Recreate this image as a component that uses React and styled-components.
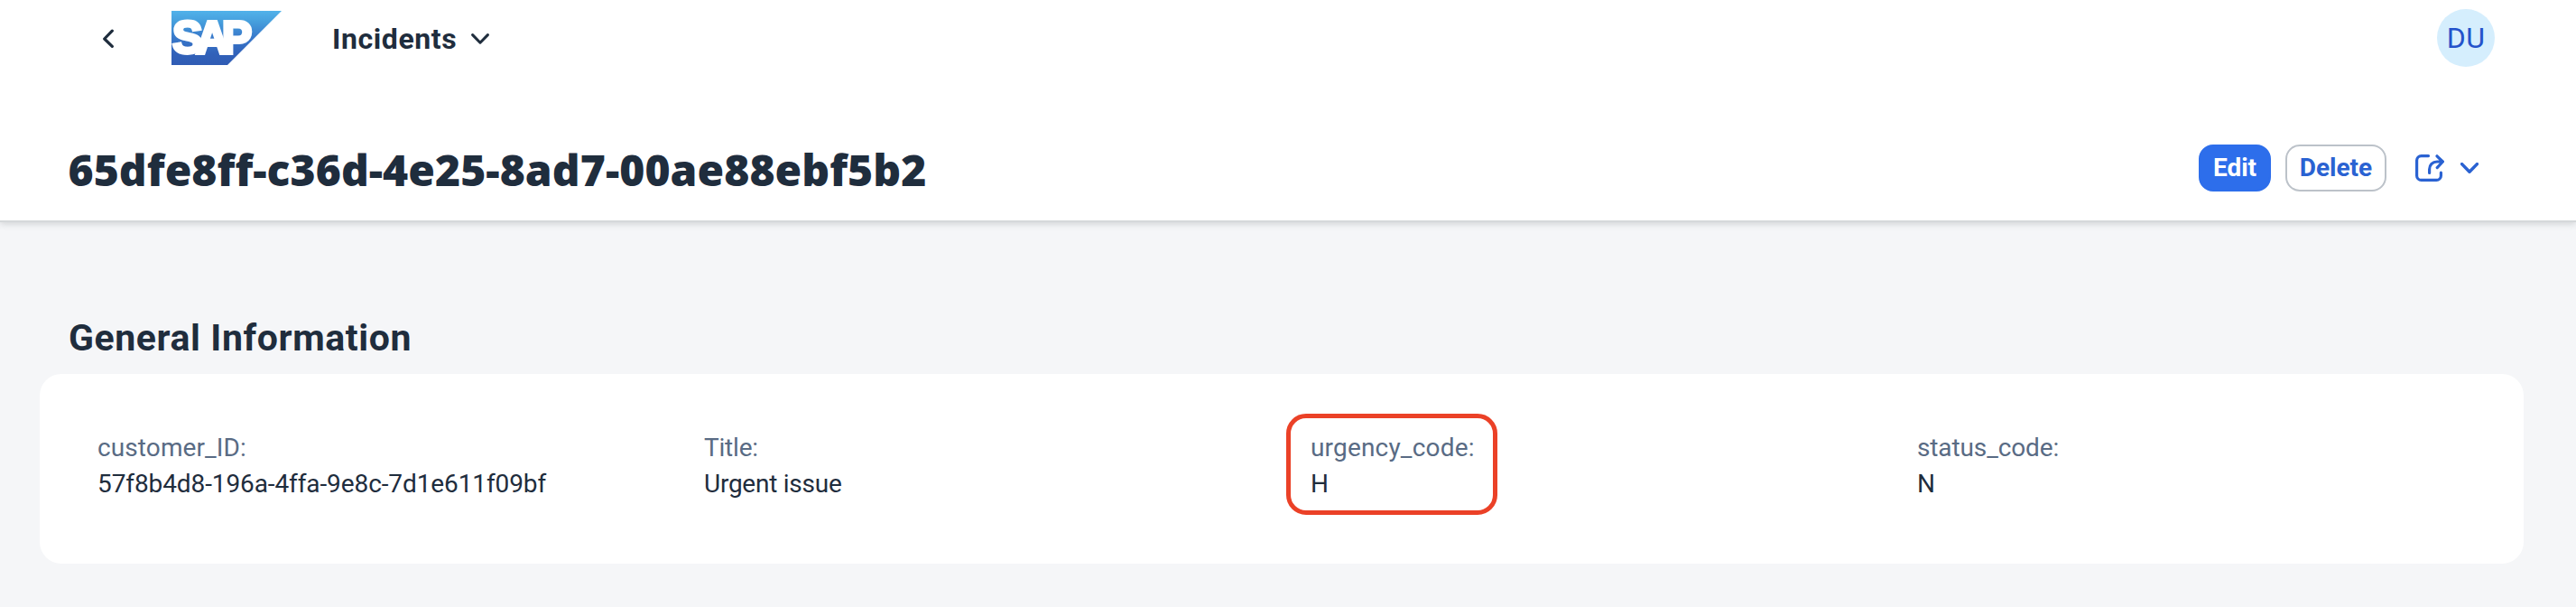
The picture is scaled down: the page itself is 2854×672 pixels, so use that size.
import React from 'react';
import styled, { createGlobalStyle } from 'styled-components';

const GlobalStyle = createGlobalStyle`
  *, *::before, *::after { box-sizing: border-box; }
  body {
    margin: 0;
    background: #f5f6f8;
    color: #1f2d3d;
    font-family: Roboto, "Liberation Sans", sans-serif;
    font-size: 28px;
  }
  button { font: inherit; cursor: pointer; }
`;

const Page = styled.div`
  min-height: 672px;
`;

const Header = styled.header`
  height: 244px;
  background: #fff;
  box-shadow: 0 2px 0 #d5d8da, 0 3px 8px rgba(60, 66, 72, 0.24);
`;

const ShellBar = styled.div`
  display: flex;
  align-items: center;
  height: 84px;
  padding: 0 90px 0 110px;
`;

const IconButton = styled.button`
  display: flex;
  align-items: center;
  justify-content: center;
  padding: 0;
  border: 0;
  background: none;
  color: ${(p) => (p.$accent ? '#2a62d2' : '#1f2d3d')};
`;

const Logo = styled.svg`
  display: block;
  margin: 0 56px 0 60px;
`;

const AppMenu = styled.button`
  display: flex;
  align-items: center;
  gap: 16px;
  padding: 2px 0 0;
  border: 0;
  background: none;
  color: inherit;
`;

const AppName = styled.span`
  font-size: 32px;
  font-weight: 700;
  line-height: 40px;
  letter-spacing: 0.6px;
`;

const Avatar = styled.div`
  display: flex;
  align-items: center;
  justify-content: center;
  width: 64px;
  height: 64px;
  margin-left: auto;
  border-radius: 50%;
  background: #d5eefd;
  color: #2453cb;
  font-size: 32px;
  letter-spacing: 0.5px;
`;

const TitleRow = styled.div`
  display: flex;
  align-items: flex-start;
  justify-content: space-between;
  padding: 74px 108px 0 75.500px;
`;

const PageTitle = styled.h1`
  margin: 0;
  font-family: "Noto Sans", sans-serif;
  font-size: 48px;
  font-weight: 900;
  line-height: 60px;
  letter-spacing: 0.05px;
`;

const Actions = styled.div`
  display: flex;
  align-items: center;
  gap: 16px;
  height: 52px;
  margin-top: 2px;
`;

const Button = styled.button`
  height: 52px;
  width: ${(p) => p.$width}px;
  padding: 0 0 2px;
  border: 2px solid ${(p) => (p.$primary ? '#2d6eeb' : '#bcc2c9')};
  border-radius: 16px;
  background: ${(p) => (p.$primary ? '#2d6eeb' : '#fff')};
  color: ${(p) => (p.$primary ? '#fff' : '#2a62d2')};
  font-weight: 700;
`;

const ShareGroup = styled.div`
  display: flex;
  align-items: center;
  gap: 18px;
  margin-left: 16px;
`;

const Section = styled.section`
  padding: 100px 58px 0 44px;
`;

const SectionTitle = styled.h2`
  margin: 0 0 10px;
  padding-left: 32px;
  font-size: 41px;
  font-weight: 700;
  line-height: 60px;
  letter-spacing: 0.6px;
`;

const Card = styled.div`
  display: grid;
  grid-template-columns: repeat(4, 672px);
  align-items: start;
  height: 210px;
  padding: 62px 0 0 64px;
  border-radius: 24px;
  background: #fff;
`;

const Field = styled.div`
  position: relative;
  width: max-content;
  line-height: 40px;
`;

const FieldLabel = styled.div`
  color: #596b84;
  letter-spacing: ${(p) => p.$spacing || 0}px;
`;

const FieldValue = styled.div`
  letter-spacing: ${(p) => p.$spacing || 0}px;
`;

const Highlight = styled.div`
  position: absolute;
  inset: -18px -25px -14px -27px;
  border: 5px solid #eb4127;
  border-radius: 22px;
`;

const FIELDS = [
  { label: 'customer_ID:', value: '57f8b4d8-196a-4ffa-9e8c-7d1e611f09bf', labelSpacing: 0.1, valueSpacing: -0.1 },
  { label: 'Title:', value: 'Urgent issue', labelSpacing: -0.2, valueSpacing: -0.25 },
  { label: 'urgency_code:', value: 'H', labelSpacing: 0.18, highlighted: true },
  { label: 'status_code:', value: 'N', labelSpacing: -0.12 },
];

const Chevron = ({ stroke }) => (
  <svg width="20" height="12" viewBox="0 0 20 12" fill="none" stroke="currentColor" strokeWidth={stroke} strokeLinecap="round" strokeLinejoin="round">
    <path d="M1.600 1.600 10 10.200l8.400-8.600" />
  </svg>
);

export default function App() {
  return (
    <Page>
      <GlobalStyle />
      <Header>
        <ShellBar>
          <IconButton aria-label="Back">
            <svg width="20" height="22" viewBox="0 0 20 22" fill="none" stroke="currentColor" strokeWidth="3.200" strokeLinecap="round" strokeLinejoin="round">
              <path d="M14.300 3.200 5.700 12l8.600 8.400" />
            </svg>
          </IconButton>
          <Logo width="122" height="60" viewBox="0 0 122 60" role="img" aria-label="SAP">
            <defs>
              <linearGradient id="logoFill" x1="0" y1="0" x2="0" y2="1">
                <stop offset="0" stopColor="#51b2ea" />
                <stop offset="0.2" stopColor="#469fdd" />
                <stop offset="0.5" stopColor="#3878ca" />
                <stop offset="0.8" stopColor="#3161b9" />
                <stop offset="1" stopColor="#305cb4" />
              </linearGradient>
            </defs>
            <path d="M0 0h122L62 60H0z" fill="url(#logoFill)" />
            <text x="1.200" y="47.200" fill="#fff" stroke="#fff" strokeWidth="3.800" fontFamily="'Liberation Sans', Arial, sans-serif" fontWeight="700" fontSize="49.500" letterSpacing="-7">
              SAP
            </text>
          </Logo>
          <AppMenu>
            <AppName>Incidents</AppName>
            <Chevron stroke={3} />
          </AppMenu>
          <Avatar>DU</Avatar>
        </ShellBar>
        <TitleRow>
          <PageTitle>65dfe8ff-c36d-4e25-8ad7-00ae88ebf5b2</PageTitle>
          <Actions>
            <Button $primary $width={80}>Edit</Button>
            <Button $width={112}>Delete</Button>
            <ShareGroup>
              <IconButton $accent aria-label="Share">
                <svg width="32" height="30" viewBox="0 0 32 30" fill="none" stroke="currentColor" strokeWidth="3.200" strokeLinecap="round" strokeLinejoin="round">
                  <path d="M14.500 1.600H6.600a5 5 0 0 0-5 5v16.800a5 5 0 0 0 5 5h16.800a5 5 0 0 0 5-5v-3.200" />
                  <path d="M15.600 20.500v-4c0-5 3.500-8.500 8.500-8.500h6M24 1.800l6.400 6.200-6.200 6.600" />
                </svg>
              </IconButton>
              <IconButton $accent aria-label="More share options">
                <Chevron stroke={3.5} />
              </IconButton>
            </ShareGroup>
          </Actions>
        </TitleRow>
      </Header>
      <Section>
        <SectionTitle>General Information</SectionTitle>
        <Card>
          {FIELDS.map((f) => (
            <Field key={f.label}>
              <FieldLabel $spacing={f.labelSpacing}>{f.label}</FieldLabel>
              <FieldValue $spacing={f.valueSpacing}>{f.value}</FieldValue>
              {f.highlighted && <Highlight />}
            </Field>
          ))}
        </Card>
      </Section>
    </Page>
  );
}
